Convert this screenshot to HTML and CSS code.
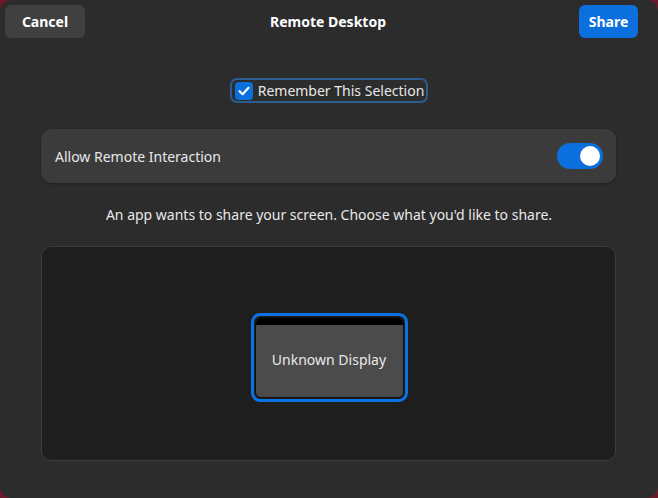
FILE: index.html
```html
<!DOCTYPE html>
<html lang="en">
  <head>
    <meta http-equiv="Content-Type" content="text/html; charset=utf-8"/>
    <title>Remote Desktop</title>
    <link rel="stylesheet" href="styles.css">
  </head>
  <body>
    <div class="window">
      <div class="header">
        <button class="btn cancel">Cancel</button>
        <div class="title">Remote Desktop</div>
        <button class="btn share">Share</button>
      </div>
      <div class="remember">
        <span class="check">
          <svg width="18" height="18" viewBox="0 0 18 18"><path d="M4.5 9.2 L7.6 12.2 L13.5 5.8" fill="none" stroke="#fff" stroke-width="2.2" stroke-linecap="round" stroke-linejoin="round"/></svg>
        </span>
        <span>Remember This Selection</span>
      </div>
      <div class="card">
        <span>Allow Remote Interaction</span>
        <span class="switch"><span class="knob"></span></span>
      </div>
      <p class="desc">An app wants to share your screen. Choose what you'd like to share.</p>
      <div class="panel">
        <div class="ring">
          <div class="tile">
            <div class="tile-bar"></div>
            <div class="tile-body">Unknown Display</div>
          </div>
        </div>
      </div>
    </div>
  </body>
</html>
```
FILE: styles.css
```css
html, body {
	margin: 0;
	height: 100%;
}
body {
	background-color: #6b1a2c;
	font-family: "Noto Sans", "Open Sans", sans-serif;
	font-size: 14px;
	color: #ffffff;
}
.window {
	height: 498px;
	background-color: #2c2c2c;
	border-radius: 12px;
	display: flex;
	flex-direction: column;
	box-sizing: border-box;
}
.header {
	display: flex;
	align-items: center;
	justify-content: space-between;
	padding: 5px 20px 0 5px;
	height: 33px;
}
.btn {
	font-family: inherit;
	font-size: 14px;
	font-weight: bold;
	color: #ffffff;
	border: none;
	border-radius: 6px;
	height: 33px;
	padding: 0;
}
.cancel {
	width: 80px;
	background-color: #404040;
}
.share {
	width: 59px;
	background-color: #0b6fdd;
}
.title {
	font-weight: bold;
	margin-left: -8px;
}
.remember {
	align-self: center;
	display: flex;
	align-items: center;
	gap: 5px;
	margin-top: 40px;
	height: 21px;
	padding: 0 2px 0 3px;
	border: 2px solid #2b5c92;
	border-radius: 7px;
	color: #e8e8e8;
}
.check {
	width: 18px;
	height: 18px;
	border-radius: 4px;
	background-color: #0b6fdd;
	display: flex;
}
.card {
	margin: 26px 42px 0 41px;
	height: 54px;
	background-color: #3b3b3b;
	border-radius: 11px;
	display: flex;
	align-items: center;
	justify-content: space-between;
	padding: 0 13px 0 14px;
	color: #e8e8e8;
	box-shadow: 0 1px 3px rgba(0, 0, 0, 0.3);
}
.switch {
	width: 46px;
	height: 26px;
	border-radius: 13px;
	background-color: #0b6fdd;
	display: flex;
	align-items: center;
	justify-content: flex-end;
	padding-right: 3px;
	box-sizing: border-box;
}
.knob {
	width: 20px;
	height: 20px;
	border-radius: 50%;
	background-color: #ffffff;
}
.desc {
	margin: 22px 0 0 0;
	text-align: center;
	color: #e8e8e8;
	line-height: 20px;
}
.panel {
	margin: 21px 42px 0 41px;
	height: 215px;
	box-sizing: border-box;
	background-color: #1e1e1f;
	border: 1px solid #3c3c3c;
	border-radius: 10px;
	display: flex;
	align-items: center;
	justify-content: center;
}
.ring {
	width: 157px;
	height: 89px;
	box-sizing: border-box;
	border: 3px solid #0b72e6;
	border-radius: 9px;
	padding: 1px;
	margin-left: 1px;
	margin-top: 7px;
}
.tile {
	height: 100%;
	border-radius: 6px;
	overflow: hidden;
	border: 1px solid #111;
	box-sizing: border-box;
	display: flex;
	flex-direction: column;
	background-color: #4b4b4b;
}
.tile-bar {
	height: 7px;
	background-color: #000000;
}
.tile-body {
	flex: 1;
	display: flex;
	align-items: center;
	justify-content: center;
	color: #e8e8e8;
	padding-bottom: 2px;
}
```
